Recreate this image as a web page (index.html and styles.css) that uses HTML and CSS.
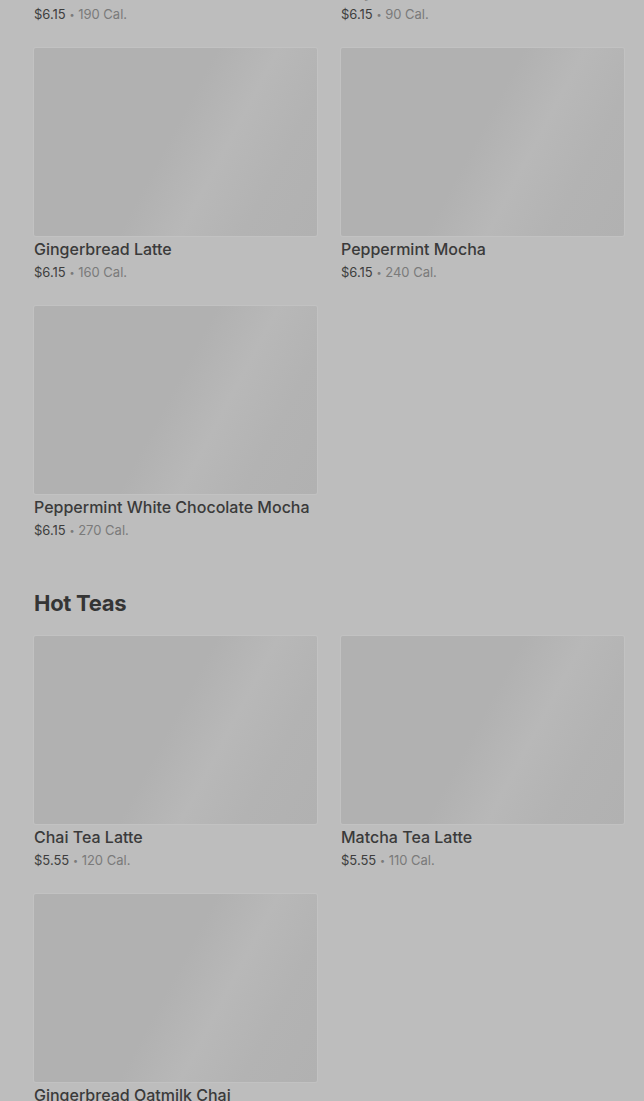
FILE: index.html
```html
<!DOCTYPE html>
<html lang="en">
<head>
    <meta charset="UTF-8">
    <meta name="viewport" content="width=device-width, initial-scale=1.0">
    <title>Menu</title>
    <link rel="stylesheet" href="styles.css">
</head>
<body>
    <div class="menu">
        <section class="category">
            <div class="product-grid">
                <div class="product">
                    <div class="product-image"></div>
                    <h3 class="product-name">Chestnut Praline Latte</h3>
                    <p class="product-info"><span class="price">$6.15</span> <span class="dot">&bull;</span> 190 Cal.</p>
                </div>
                <div class="product">
                    <div class="product-image"></div>
                    <h3 class="product-name">Sugar Cookie Almondmilk Latte</h3>
                    <p class="product-info"><span class="price">$6.15</span> <span class="dot">&bull;</span> 90 Cal.</p>
                </div>
                <div class="product">
                    <div class="product-image"></div>
                    <h3 class="product-name">Gingerbread Latte</h3>
                    <p class="product-info"><span class="price">$6.15</span> <span class="dot">&bull;</span> 160 Cal.</p>
                </div>
                <div class="product">
                    <div class="product-image"></div>
                    <h3 class="product-name">Peppermint Mocha</h3>
                    <p class="product-info"><span class="price">$6.15</span> <span class="dot">&bull;</span> 240 Cal.</p>
                </div>
                <div class="product">
                    <div class="product-image"></div>
                    <h3 class="product-name">Peppermint White Chocolate Mocha</h3>
                    <p class="product-info"><span class="price">$6.15</span> <span class="dot">&bull;</span> 270 Cal.</p>
                </div>
            </div>
        </section>

        <section class="category">
            <h2 class="category-title">Hot Teas</h2>
            <div class="product-grid">
                <div class="product">
                    <div class="product-image"></div>
                    <h3 class="product-name">Chai Tea Latte</h3>
                    <p class="product-info"><span class="price">$5.55</span> <span class="dot">&bull;</span> 120 Cal.</p>
                </div>
                <div class="product">
                    <div class="product-image"></div>
                    <h3 class="product-name">Matcha Tea Latte</h3>
                    <p class="product-info"><span class="price">$5.55</span> <span class="dot">&bull;</span> 110 Cal.</p>
                </div>
                <div class="product">
                    <div class="product-image"></div>
                    <h3 class="product-name">Gingerbread Oatmilk Chai</h3>
                    <p class="product-info"><span class="price">$5.55</span> <span class="dot">&bull;</span> 220 Cal.</p>
                </div>
            </div>
        </section>
    </div>
</body>
</html>
```

FILE: styles.css
```css
body {
    margin: 0;
    background-color: #bdbdbd;
    font-family: Inter, "Open Sans", Arial, sans-serif;
    color: #3a3a3a;
    overflow: hidden;
}
/* page is scrolled part way down the coffee list */
.menu {
    margin-top: -210px;
    padding: 0 20px 0 34px;
}
.category + .category {
    margin-top: 48px;
}
.category-title {
    margin: 0 0 18px;
    height: 30px;
    line-height: 30px;
    font-size: 22px;
    font-weight: 700;
    letter-spacing: -0.3px;
    color: #353535;
}
.product-grid {
    display: grid;
    grid-template-columns: 283px 283px;
    column-gap: 24px;
    row-gap: 24px;
}
.product-image {
    height: 188px;
    border-radius: 2px;
    background: linear-gradient(118deg, #b1b1b1 0%, #b1b1b1 48%, #b8b8b8 64%, #b3b3b3 80%, #b1b1b1 100%);
    box-shadow: 0 0 0 1px rgba(255, 255, 255, 0.08);
}
.product-name {
    margin: 3px 0 0;
    height: 20px;
    line-height: 20px;
    font-size: 16px;
    font-weight: 500;
    color: #3a3a3a;
    white-space: nowrap;
}
.product-info {
    margin: 4px 0 0;
    height: 19px;
    line-height: 18px;
    font-size: 13px;
    color: #7a7a7a;
}
.price {
    color: #3d3d3d;
}
.dot {
    font-size: 9px;
    vertical-align: 1px;
}
```
